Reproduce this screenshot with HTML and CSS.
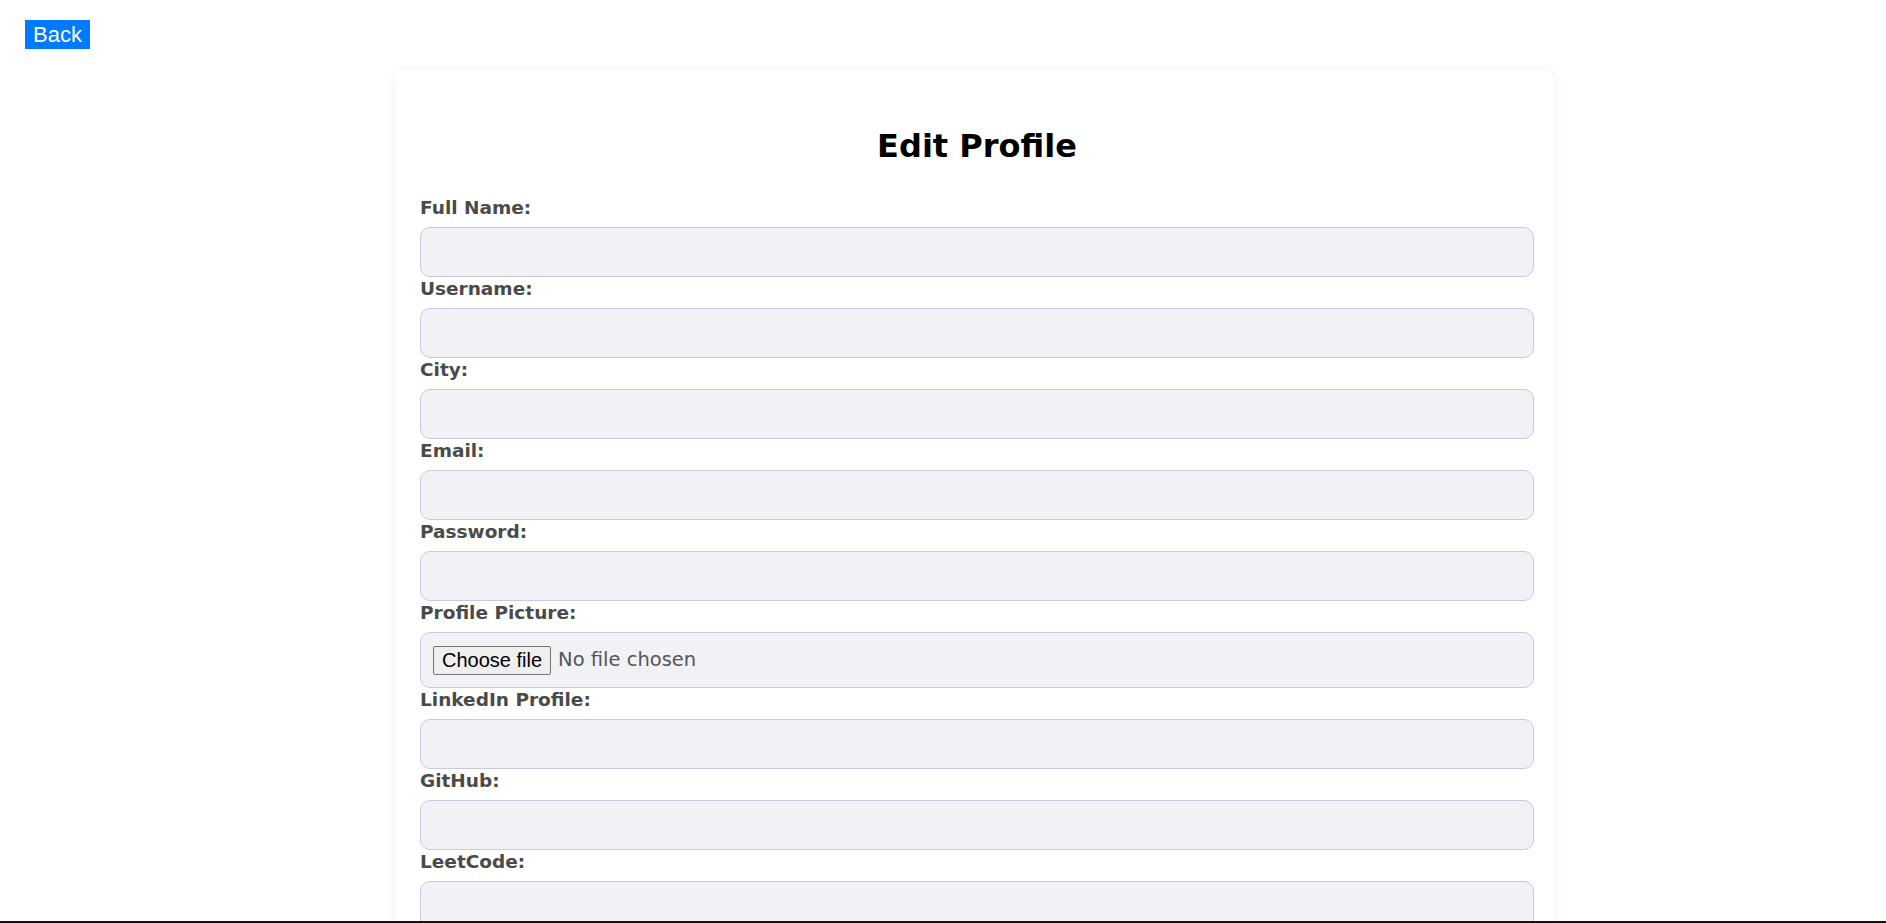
FILE: index.html
```html
<!DOCTYPE html>
<html lang="en">
<head>
<meta charset="utf-8">
<title>Edit Profile</title>
<link rel="stylesheet" href="styles.css">
</head>
<body>
<div class="topbar">
  <button class="back-btn" type="button">Back</button>
</div>
<main class="card">
  <h1 class="title">Edit Profile</h1>
  <form class="form">
    <div class="field">
      <label class="label" for="fullname">Full Name:</label>
      <input class="input" id="fullname" type="text">
    </div>
    <div class="field">
      <label class="label" for="username">Username:</label>
      <input class="input" id="username" type="text">
    </div>
    <div class="field">
      <label class="label" for="city">City:</label>
      <input class="input" id="city" type="text">
    </div>
    <div class="field">
      <label class="label" for="email">Email:</label>
      <input class="input" id="email" type="email">
    </div>
    <div class="field">
      <label class="label" for="password">Password:</label>
      <input class="input" id="password" type="password">
    </div>
    <div class="field">
      <label class="label" for="picture">Profile Picture:</label>
      <div class="input input-file">
        <label class="file-btn" for="picture">Choose file</label>
        <span class="file-name">No file chosen</span>
        <input class="file-hidden" id="picture" type="file">
      </div>
    </div>
    <div class="field">
      <label class="label" for="linkedin">LinkedIn Profile:</label>
      <input class="input" id="linkedin" type="text">
    </div>
    <div class="field">
      <label class="label" for="github">GitHub:</label>
      <input class="input" id="github" type="text">
    </div>
    <div class="field">
      <label class="label" for="leetcode">LeetCode:</label>
      <input class="input" id="leetcode" type="text">
    </div>
  </form>
</main>
<div class="bottom-edge"></div>
</body>
</html>
```
FILE: styles.css
```css
html {
  overflow: hidden;
}
body {
  margin: 0;
  background: #ffffff;
  font-family: "DejaVu Sans", "Liberation Sans", sans-serif;
}
.topbar {
  padding: 20px 25px 0;
  height: 29px;
}
.back-btn {
  display: block;
  margin: 0;
  border: none;
  background: #007bff;
  color: #ffffff;
  font-family: "Liberation Sans", Arial, sans-serif;
  font-size: 22px;
  line-height: 25px;
  padding: 2px 8px;
  border-radius: 0;
}
.card {
  width: 1159px;
  box-sizing: border-box;
  margin: 21px 0 0 395px;
  padding: 20px 20px 40px 25px;
  background: #ffffff;
  border-radius: 10px;
  box-shadow: 0 0 12px rgba(0, 0, 0, 0.06);
}
.title {
  margin: 38px 0 31px;
  text-align: center;
  font-size: 32px;
  line-height: 37px;
  font-weight: bold;
  color: #000000;
}
.form {
  display: flex;
  flex-direction: column;
}
.field {
  display: flex;
  flex-direction: column;
}
.label {
  display: block;
  font-size: 18.5px;
  line-height: 23px;
  font-weight: bold;
  color: #4a4a4a;
  margin-bottom: 8px;
}
.input {
  box-sizing: border-box;
  width: 100%;
  height: 50px;
  margin: 0;
  padding: 12px;
  border: 1px solid #cbc8de;
  border-radius: 10px;
  background: #f1f1f6;
  font-family: "DejaVu Sans", sans-serif;
  font-size: 19.5px;
  color: #555555;
}
.input-file {
  display: flex;
  align-items: center;
  height: 56px;
  padding: 12px;
}
.file-btn {
  box-sizing: border-box;
  height: 29px;
  padding: 0 8px;
  margin-right: 7px;
  border: 1px solid #767676;
  border-radius: 2px;
  background: #efefef;
  color: #000000;
  font-family: "Liberation Sans", Arial, sans-serif;
  font-size: 20px;
  line-height: 27px;
}
.file-name {
  color: #555555;
  line-height: 24px;
}
.file-hidden {
  display: none;
}
.bottom-edge {
  position: fixed;
  left: 0;
  right: 0;
  bottom: 0;
  height: 2px;
  background: #111111;
}
```
